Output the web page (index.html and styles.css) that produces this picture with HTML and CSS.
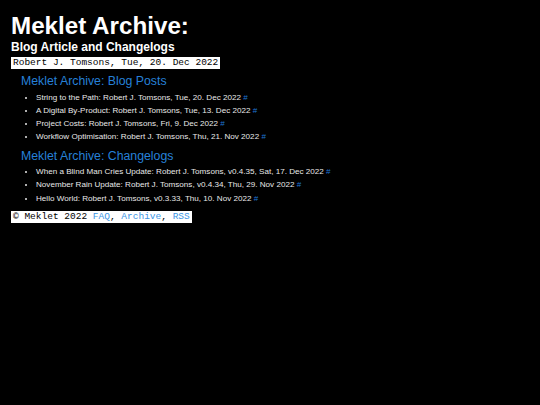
FILE: index.html
```html
<!DOCTYPE html>
<html lang="en">
<head>
<meta charset="utf-8">
<title>Meklet Archive</title>
<link rel="stylesheet" href="styles.css">
</head>
<body>
<div class="page">
  <header class="masthead">
    <h1 class="title">Meklet Archive:</h1>
    <h2 class="subtitle">Blog Article and Changelogs</h2>
    <div class="byline">Robert J. Tomsons, Tue, 20. Dec 2022</div>
  </header>
  <section class="group">
    <h3 class="group-title"><a href="#">Meklet Archive: Blog Posts</a></h3>
    <ul class="entries">
      <li>String to the Path: Robert J. Tomsons, Tue, 20. Dec 2022 <a class="hash" href="#">#</a></li>
      <li>A Digital By-Product: Robert J. Tomsons, Tue, 13. Dec 2022 <a class="hash" href="#">#</a></li>
      <li>Project Costs: Robert J. Tomsons, Fri, 9. Dec 2022 <a class="hash" href="#">#</a></li>
      <li>Workflow Optimisation: Robert J. Tomsons, Thu, 21. Nov 2022 <a class="hash" href="#">#</a></li>
    </ul>
  </section>
  <section class="group">
    <h3 class="group-title"><a href="#">Meklet Archive: Changelogs</a></h3>
    <ul class="entries">
      <li>When a Blind Man Cries Update: Robert J. Tomsons, v0.4.35, Sat, 17. Dec 2022 <a class="hash" href="#">#</a></li>
      <li>November Rain Update: Robert J. Tomsons, v0.4.34, Thu, 29. Nov 2022 <a class="hash" href="#">#</a></li>
      <li>Hello World: Robert J. Tomsons, v0.3.33, Thu, 10. Nov 2022 <a class="hash" href="#">#</a></li>
    </ul>
  </section>
  <footer class="foot">© Meklet 2022 <a href="#">FAQ</a>, <a href="#">Archive</a>, <a href="#">RSS</a></footer>
</div>
</body>
</html>
```
FILE: styles.css
```css
html, body {
  margin: 0;
  padding: 0;
  background: #000;
}
body {
  color: #fff;
  font-family: "Liberation Sans", Arial, sans-serif;
}
.page {
  padding: 11px 11px 0 11px;
}
.masthead {
  margin-bottom: 5px;
}
.title {
  margin: 0;
  font-size: 24.2px;
  line-height: 29px;
  font-weight: bold;
}
.subtitle {
  margin: 0;
  font-size: 12px;
  line-height: 14px;
  font-weight: bold;
}
.byline {
  margin-top: 3px;
  display: table;
  background: #fff;
  color: #000;
  font-family: "Liberation Mono", "Courier New", monospace;
  font-size: 9.5px;
  line-height: 12px;
  padding: 0 2px;
}
.group {
  padding-left: 10px;
}
.group + .group {
  margin-top: 5px;
}
.group-title {
  margin: 0 0 2.5px 0;
  font-size: 12.3px;
  line-height: 14px;
  font-weight: normal;
}
.group-title a {
  color: #2680d8;
  text-decoration: none;
}
.entries {
  margin: 0;
  padding-left: 15px;
  font-size: 8.1px;
  line-height: 13.25px;
  color: #e8e8e8;
}
.hash {
  color: #1f74d0;
  text-decoration: none;
}
.foot {
  margin-top: 6px;
  display: table;
  background: #fff;
  color: #000;
  font-family: "Liberation Mono", "Courier New", monospace;
  font-size: 9.5px;
  line-height: 12px;
  padding: 0 2px;
}
.foot a {
  color: #3b95e6;
  text-decoration: none;
}
```
